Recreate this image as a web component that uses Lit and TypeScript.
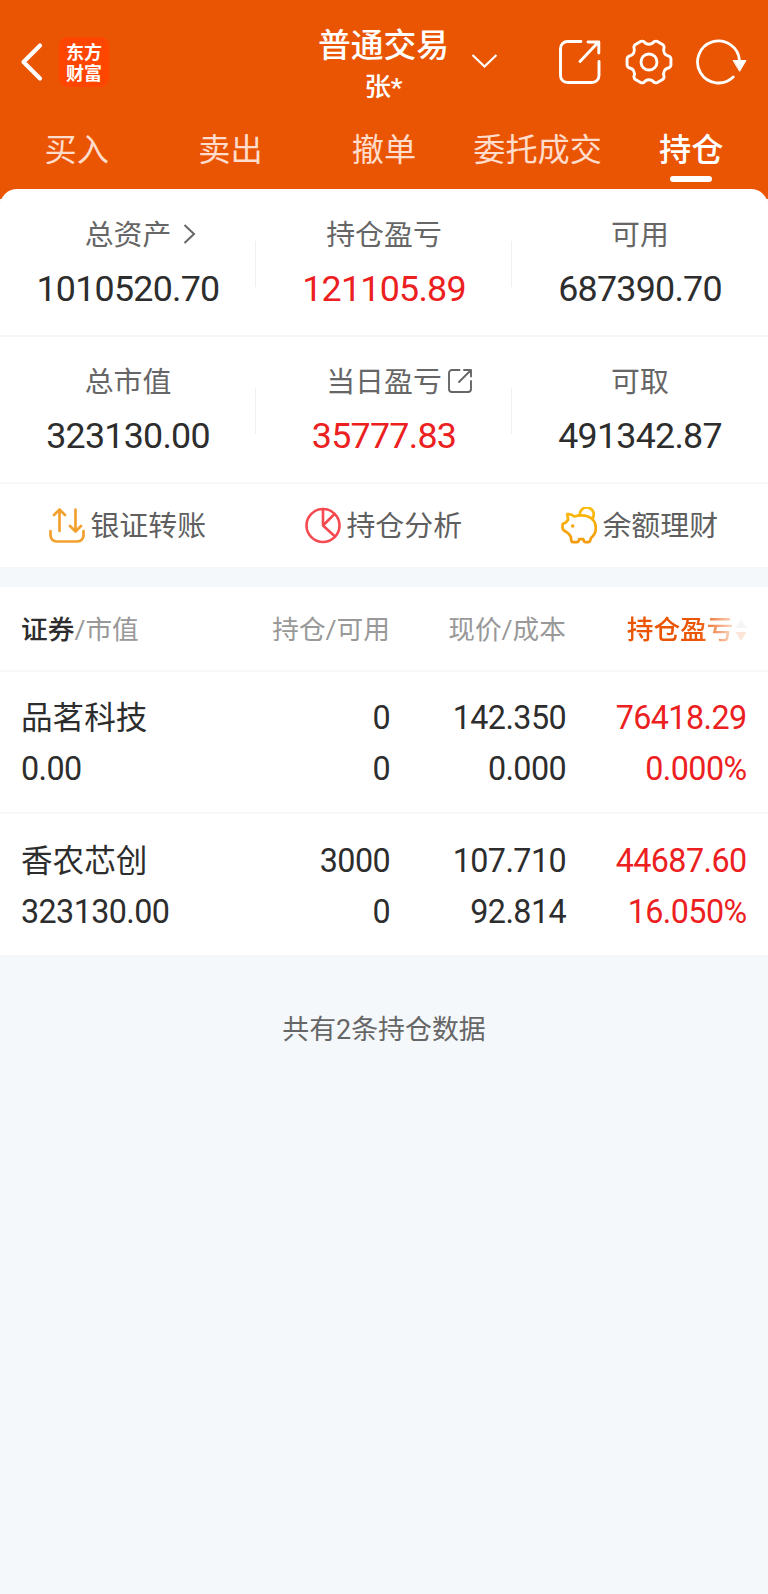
import { LitElement, html, css, svg, nothing } from "lit";
import { customElement, property } from "lit/decorators.js";

const FONT = css`Roboto, "Noto Sans CJK SC", sans-serif`;

/** Six-lobed gear outline centred on (23, 22). */
function gearPath(): string {
  const at = (deg: number, r: number) => {
    const a = (deg * Math.PI) / 180;
    return `${(23 + r * Math.cos(a)).toFixed(2)} ${(22 + r * Math.sin(a)).toFixed(2)}`;
  };
  let d = "";
  for (let k = 0; k < 6; k++) {
    const a = k * 60;
    d += `${k ? "L" : "M"}${at(a - 16, 21)}Q${at(a - 12, 22.3)} ${at(a - 9, 22.2)}`;
    d += `L${at(a + 9, 22.2)}Q${at(a + 12, 22.3)} ${at(a + 16, 21)}`;
    d += `C${at(a + 22, 17)} ${at(a + 38, 17)} ${at(a + 44, 21)}`;
  }
  return d + "Z";
}

@customElement("trade-header")
class TradeHeader extends LitElement {
  static styles = css`
    :host { display: block; height: 199px; background: #ea5504; color: #fff; font-family: ${FONT}; }
    .bar { display: grid; grid-template-columns: 1fr 130px 1fr; height: 124px; }
    .left { display: flex; align-items: center; padding: 0 0 0 19px; gap: 16px; }
    .left svg { display: block; }
    .logo { width: 50px; height: 50px; border-radius: 9px; background: #ff4600; display: flex; flex-direction: column; align-items: center; justify-content: center; font: 700 18px/21.500px "Noto Sans CJK SC", sans-serif; }
    .mid { display: flex; flex-direction: column; align-items: center; padding: 25px 1px 0 0; white-space: nowrap; }
    .title { font-size: 32.8px; line-height: 42px; font-weight: 500; }
    .name { font-size: 26.5px; line-height: 40px; font-weight: 500; }
    .right { display: flex; align-items: center; }
    .down { margin-left: 22px; margin-top: -2px; }
    .share { margin-left: 61px; }
    .gear { margin-left: 25px; }
    .reload { margin-left: 24px; }
    .tabs { display: grid; grid-template-columns: repeat(5, 1fr); }
    .tab { display: flex; flex-direction: column; align-items: center; font-size: 32.200px; line-height: 52px; color: #ffdccb; white-space: nowrap; }
    .active { color: #fff; font-weight: 500; }
    .mark { width: 42px; height: 6px; border-radius: 3px; background: #fff; }
  `;
  render() {
    const tabs = ["买入", "卖出", "撤单", "委托成交", "持仓"];
    return html`
      <div class="bar">
        <div class="left">
          <svg width="24" height="42" viewBox="0 0 24 42" fill="none" stroke="#fff" stroke-width="4.2" stroke-linecap="round" stroke-linejoin="round"><path d="M21 4.5L4.500 21L21 37.5"/></svg>
          <div class="logo"><span>东方</span><span>财富</span></div>
        </div>
        <div class="mid"><div class="title">普通交易</div><div class="name">张*</div></div>
        <div class="right">
          <svg class="down" width="27" height="16" viewBox="0 0 27 16" fill="none" stroke="#fff" stroke-width="2.2"><path d="M1.5 2L13.5 13.5L25.5 2"/></svg>
          <svg class="share" width="42" height="46" viewBox="0 0 42 46" fill="none" stroke="#fff" stroke-width="2.9" stroke-linecap="round" stroke-linejoin="round"><path d="M22 2.5H8.5a7 7 0 0 0-7 7V36.500a7 7 0 0 0 7 7H33a7 7 0 0 0 7-7V22.500M21 22.500L39 3.500M29 3H39.800V14"/></svg>
          <svg class="gear" width="46" height="44" viewBox="0 0 46 44" overflow="visible" fill="none" stroke="#fff" stroke-width="2.9" stroke-linejoin="round"><path d=${gearPath()}/><circle cx="23" cy="22" r="8"/></svg>
          <svg class="reload" width="51" height="46" viewBox="0 0 51 46" fill="none" stroke="#fff" stroke-width="2.8" stroke-linecap="round"><path d="M37.200 38A21 21 0 1 1 43.500 21.500"/><path d="M37.500 21.500H50L43.800 32Z" fill="#fff" stroke-width="1"/></svg>
        </div>
      </div>
      <div class="tabs">
        ${tabs.map((t, i) => html`<div class="tab ${i === 4 ? "active" : ""}"><span>${t}</span>${i === 4 ? html`<div class="mark"></div>` : nothing}</div>`)}
      </div>`;
  }
}

interface Metric { label: string; value: string; up?: boolean; icon?: "more" | "open"; }

@customElement("asset-row")
class AssetRow extends LitElement {
  @property({ attribute: false }) items: Metric[] = [];
  static styles = css`
    :host { display: grid; grid-template-columns: repeat(3, 1fr); box-sizing: border-box; height: 147px; border-bottom: 2px solid #f6f7f8; font-family: ${FONT}; }
    .cell { display: flex; flex-direction: column; align-items: center; background: linear-gradient(#eff0f1, #eff0f1) right 51px / 1px 46px no-repeat; }
    .cell:last-child { background: none; }
    .label { position: relative; margin-top: 23px; font-size: 28.9px; line-height: 44px; color: #666; }
    .value { margin-top: 10px; font-size: 35.800px; letter-spacing: -.75px; line-height: 44px; color: #2d2d2d; }
    .up { color: #ec2020; }
    .more { position: absolute; left: 98px; top: 10px; }
    .open { position: absolute; left: 121px; top: 8px; }
  `;
  render() {
    return this.items.map((m) => html`<div class="cell">
      <div class="label">${m.label}${m.icon === "more"
        ? html`<svg class="more" width="13" height="22" viewBox="0 0 13 22" fill="none" stroke="#666" stroke-width="2"><path d="M1.500 2L11 11L1.500 20"/></svg>`
        : m.icon === "open"
        ? html`<svg class="open" width="26" height="26" viewBox="0 0 26 26" fill="none" stroke="#666" stroke-width="1.900" stroke-linecap="round" stroke-linejoin="round"><path d="M12.500 2H5a3 3 0 0 0-3 3V21a3 3 0 0 0 3 3H21a3 3 0 0 0 3-3V13M12 14L23.500 2.500M17 2H24V8.500"/></svg>`
        : nothing}</div>
      <div class="value ${m.up ? "up" : ""}">${m.value}</div>
    </div>`);
  }
}

@customElement("quick-actions")
class QuickActions extends LitElement {
  static styles = css`
    :host { display: grid; grid-template-columns: repeat(3, 1fr); height: 83px; font-family: ${FONT}; color: #5f5f5f; font-size: 28.9px; }
    .item { display: flex; align-items: center; justify-content: center; gap: 5.500px; padding-right: 1px; line-height: 44px; }
    svg { display: block; }
  `;
  render() {
    const icons = [
      svg`<g stroke="#f2a02e" stroke-width="2.700"><path d="M1.500 24V28.500a6 6 0 0 0 6 6H28.500a6 6 0 0 0 6-6V24"/><path d="M10.500 24V3M5 8L10.500 2.500L16 8M26.500 2.500V23.500M21 19L26.500 24.500L32 19"/></g>`,
      svg`<g stroke="#f44a50" stroke-width="2.600"><circle cx="18" cy="18.500" r="16.500"/><path d="M18 2V18.500L30 29.500M18 18.500L29.500 7"/></g>`,
      svg`<defs><linearGradient id="pig" gradientUnits="userSpaceOnUse" x1="0" y1="0" x2="0" y2="36"><stop offset="0" stop-color="#fbbd08"/><stop offset="1" stop-color="#f39a0e"/></linearGradient></defs><g stroke="url(#pig)" stroke-width="2.700"><path d="M6.200 7.200C8.300 6.800 11.500 7.800 13.300 9.500C17 8.200 22 7.900 26.500 9.300C31.800 11.300 34.800 15.500 34.800 21C34.800 26 32.800 28.800 30 31L29 34Q28.600 35.200 27.300 35.200H24.500Q23.300 35.200 22.900 34L22.300 32.200H18.200L17.600 34Q17.200 35.200 16 35.200H12Q10.700 35.200 10.400 34L9.800 29.800C8.700 27.700 7.600 26.400 6.300 25.600L3 23.500Q1.500 22.600 1.500 21V18Q1.500 16.800 2.700 16.400L4.800 15.600Q6 14 7.200 12.800Z"/><path d="M18.800 8.300A7 7 0 1 1 31.500 11.500"/></g><circle cx="11.700" cy="19" r="1.800" fill="#f5a50c"/>`,
    ];
    return ["银证转账", "持仓分析", "余额理财"].map((t, i) => html`<div class="item">
      <svg width="36" height="37" viewBox="0 0 36 37" fill="none" stroke-linecap="round" stroke-linejoin="round">${icons[i]}</svg><span>${t}</span></div>`);
  }
}

@customElement("holdings-table")
class HoldingsTable extends LitElement {
  static styles = css`
    :host { display: block; background: #fff; font-family: ${FONT}; }
    .head, .row { display: grid; grid-template-columns: 191px 178px 176px 180.500px; padding: 0 21px; text-align: right; white-space: nowrap; box-sizing: border-box; }
    .head { height: 85px; border-bottom: 2px solid #f6f7f8; font-size: 26.700px; line-height: 86px; color: #999; }
    .first { text-align: left; }
    .dark { color: #2d2d2d; font-weight: 500; }
    .sort { display: flex; align-items: center; justify-content: flex-end; gap: 1px; color: #ea5504; font-weight: 500; -webkit-mask-image: linear-gradient(90deg, #000 133px, rgba(0,0,0,.15) 170px); mask-image: linear-gradient(90deg, #000 133px, rgba(0,0,0,.15) 170px); }
    .row { height: 142px; border-bottom: 2px solid #f6f7f8; padding-top: 21px; grid-auto-rows: 51px; line-height: 51px; font-size: 32.300px; letter-spacing: -.6px; color: #2d2d2d; }
    .name { font-size: 31.600px; letter-spacing: 0; }
    .row:last-child { height: 141px; padding-top: 22px; border-bottom: none; }
    .up { color: #ec2020; }
  `;
  render() {
    const rows = [
      ["品茗科技", "0", "142.350", "76418.29", "0.00", "0", "0.000", "0.000%"],
      ["香农芯创", "3000", "107.710", "44687.60", "323130.00", "0", "92.814", "16.050%"],
    ];
    const cls = (i: number) => (i === 0 ? "first name" : i === 4 ? "first" : i % 4 === 3 ? "up" : "");
    return html`
      <div class="head">
        <div class="first"><span class="dark">证券</span>/市值</div><div>持仓/可用</div><div>现价/成本</div>
        <div class="sort"><span>持仓盈亏</span><svg width="12" height="26" viewBox="0 0 12 26"><path d="M6 2L11.500 11H.5Z" fill="#bbb"/><path d="M.5 15H11.500L6 24Z" fill="#ea5504"/></svg></div>
      </div>
      ${rows.map((r) => html`<div class="row">${r.map((c, i) => html`<div class="${cls(i)}">${c}</div>`)}</div>`)}`;
  }
}

@customElement("app-root")
class AppRoot extends LitElement {
  static styles = css`
    :host { display: block; min-height: 1594px; background: #f4f8fa; font-family: ${FONT}; }
    .card { margin-top: -10px; padding-top: 1px; position: relative; background: #fff; border-radius: 17px 17px 0 0; }
    .table { display: block; margin-top: 20px; }
    .foot { margin-top: 53px; text-align: center; font-size: 26.900px; line-height: 44px; color: #666; }
  `;
  render() {
    const top: Metric[] = [
      { label: "总资产", value: "1010520.70", icon: "more" },
      { label: "持仓盈亏", value: "121105.89", up: true },
      { label: "可用", value: "687390.70" },
    ];
    const bottom: Metric[] = [
      { label: "总市值", value: "323130.00" },
      { label: "当日盈亏", value: "35777.83", up: true, icon: "open" },
      { label: "可取", value: "491342.87" },
    ];
    return html`
      <trade-header></trade-header>
      <div class="card">
        <asset-row .items=${top}></asset-row>
        <asset-row .items=${bottom}></asset-row>
        <quick-actions></quick-actions>
      </div>
      <holdings-table class="table"></holdings-table>
      <div class="foot">共有2条持仓数据</div>`;
  }
}
